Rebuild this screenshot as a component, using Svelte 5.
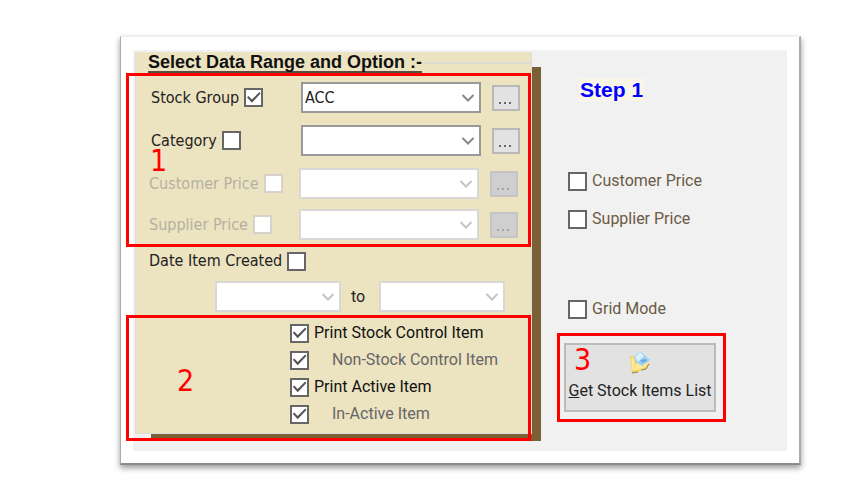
<script>
  let filters = $state([
    { id: 'group', label: 'Stock Group', checked: true, value: 'ACC', disabled: false },
    { id: 'category', label: 'Category', checked: false, value: '', disabled: false },
    { id: 'customer', label: 'Customer Price', checked: false, value: '', disabled: true },
    { id: 'supplier', label: 'Supplier Price', checked: false, value: '', disabled: true }
  ]);
  let prints = $state([
    { label: 'Print Stock Control Item', checked: true, sub: false },
    { label: 'Non-Stock Control Item', checked: true, sub: true },
    { label: 'Print Active Item', checked: true, sub: false },
    { label: 'In-Active Item', checked: true, sub: true }
  ]);
  let byDate = $state(false);
</script>

{#snippet chevron()}
  <svg class="chevron" viewBox="0 0 14 10" width="14" height="10" aria-hidden="true">
    <path d="M1.5 2 L7 7.5 L12.5 2" fill="none" stroke="currentColor" stroke-width="2" />
  </svg>
{/snippet}

<main class="page">
  <div class="card">
    <div class="window">
      <section class="range">
        <h2><span>Select Data Range and Option :-</span></h2>
        <div class="filters">
          {#each filters as f (f.id)}
            <div class="row {f.id}" class:off={f.disabled}>
              <label class="tick">{f.label}<input type="checkbox" bind:checked={f.checked} disabled={f.disabled} /></label>
              <div class="combo">
                <select aria-label={f.label} bind:value={f.value} disabled={f.disabled}>
                  <option value=""></option>
                  <option value="ACC">ACC</option>
                </select>
                {@render chevron()}
              </div>
              <button class="more" type="button" aria-label="Browse {f.label}" disabled={f.disabled}><i></i><i></i><i></i></button>
            </div>
          {/each}
          <span class="mark one"><b>1</b></span>
        </div>
        <div class="created">
          <label class="tick">Date Item Created<input type="checkbox" bind:checked={byDate} /></label>
          <div class="dates">
            <div class="combo off">
              <select aria-label="Created from" disabled><option></option></select>
              {@render chevron()}
            </div>
            <span>to</span>
            <div class="combo off">
              <select aria-label="Created to" disabled><option></option></select>
              {@render chevron()}
            </div>
          </div>
        </div>
        <div class="prints">
          {#each prints as p}
            <label class="tick" class:sub={p.sub}><input type="checkbox" bind:checked={p.checked} /><span>{p.label}</span></label>
          {/each}
          <span class="mark two"><b>2</b></span>
        </div>
      </section>

      <section class="step">
        <h3>Step 1</h3>
        <div class="prices">
          <label class="tick"><input type="checkbox" />Customer Price</label>
          <label class="tick"><input type="checkbox" />Supplier Price</label>
        </div>
        <label class="tick"><input type="checkbox" />Grid Mode</label>
        <div class="action">
          <button class="get" type="button">
            <svg viewBox="0 0 24 24" width="24" height="24" aria-hidden="true">
              <path d="M2 7 Q4 4 7 8 L8 13 L15 18 L20 11 L21 14 L18 19 L13 20 L10 22 L4 23 Z" fill="#f3cf5e" />
              <path d="M3 8 Q5 6 6 9 L7 16 L4 20 Z" fill="#fbe795" />
              <path d="M6 7 L12 1 L22 10 L14 17 L8 13 Z" fill="#9fd0f4" />
              <path d="M7 7 L12 2 L16 6 L10 12 Z" fill="#d9effd" />
              <path d="M12 10 L18 9 L19 11 L14 13 Z" fill="#68afe5" />
              <path d="M4 21 L9 13 L14 16 L21 11 L18 17 L13 19 Z" fill="#ffea94" />
              <path d="M4 23 L10 22 M13 20 L18 19 L21 14" fill="none" stroke="#8f8350" stroke-width="1" />
            </svg>
            <span><u>G</u>et Stock Items List</span>
          </button>
          <span class="mark three"><b>3</b></span>
        </div>
      </section>
    </div>
  </div>
</main>

<style>
  :global(body) { margin: 0; background: #fff; }
  * { box-sizing: border-box; }
  .page {
    padding: 36px 47px 32px 120px;
    font: 16px/20px Roboto, "Liberation Sans", sans-serif;
    color: #222;
  }
  .card {
    padding: 13px 12px 12px;
    background: #fff;
    border: 1px solid #aaa;
    border-top-color: #eee;
    border-right: 2px solid #aaa;
    border-bottom: 2px solid #8a8a8a;
    box-shadow: 0 3px 6px rgba(0, 0, 0, 0.4);
  }
  .window {
    display: flex;
    gap: 36px;
    padding: 2px 0 17px 2px;
    background: #f1f1f1;
    isolation: isolate;
  }
  .range {
    position: relative;
    flex: 397 1 0;
    background: #ece3c0;
    border: 1px solid #ddd;
    border-top: 0;
  }
  .range::before {
    content: "";
    position: absolute;
    z-index: -1;
    inset: 15px -10px -8px 15px;
    background: #7b6035;
  }
  h2 {
    display: flex;
    align-items: center;
    gap: 2px;
    margin: 0;
    padding: 1px 0 0 12px;
    font: bold 18px/18px "Liberation Sans", Arial, sans-serif;
    color: #111;
  }
  h2 span { border-bottom: 2px solid #555043; white-space: nowrap; }
  h2::after { content: ""; flex: 1; height: 2px; background: #dddcd2; }
  .filters { position: relative; padding: 9px 13px 7px; }
  .row {
    display: flex;
    align-items: center;
    height: 31px;
    margin-bottom: 12px;
  }
  .row.group, .row.category { padding-left: 2px; margin-right: -2px; }
  .row.customer { margin-bottom: 10px; }
  .row.supplier { margin-bottom: 0; }
  .row > .tick { flex: 0 0 150px; }
  .row > .combo { flex: 1; margin-right: 11px; }
  .tick {
    display: flex;
    align-items: center;
    gap: 5px;
    white-space: nowrap;
  }
  .row .tick, .created > .tick { font-family: "DejaVu Sans Condensed", "Noto Sans", sans-serif; }
  .off .tick { color: #b5b1a2; }
  input {
    appearance: none;
    flex: none;
    display: grid;
    place-items: center;
    width: 19px;
    height: 19px;
    margin: 0;
    background: #fff;
    border: 2px solid #666;
  }
  input:disabled { border-color: #d4d2ca; }
  input:checked::before {
    content: "";
    width: 15px;
    height: 13px;
    background: #555;
    clip-path: polygon(5% 48%, 15% 38%, 38% 66%, 88% 8%, 96% 20%, 38% 90%);
  }
  .combo { position: relative; height: 31px; color: #888; }
  .combo.off, .off .combo { color: #c4c4c4; }
  select {
    appearance: none;
    display: block;
    width: 100%;
    height: 100%;
    padding: 0 2px;
    background: #fff;
    border: 2px solid #999;
    border-radius: 0;
    font: 16px/20px "DejaVu Sans Condensed", "Noto Sans", sans-serif;
    color: #222;
  }
  select:disabled { border-color: #d8d8d5; opacity: 1; }
  .chevron { position: absolute; right: 6px; top: 11px; pointer-events: none; }
  .more {
    display: flex;
    align-items: end;
    justify-content: center;
    gap: 3px;
    width: 28px;
    height: 26px;
    padding: 0 2px 5px 0;
    background: #e2e2e2;
    border: 2px solid #b8b8b8;
    color: #666;
  }
  .more i { width: 2px; height: 2px; background: currentColor; }
  .more:disabled { background: #cfcfcf; border-color: #c4c4c4; color: #a4a4a4; }
  .created { padding: 4px 26px 0 13px; }
  .dates {
    display: flex;
    align-items: center;
    margin: 10px 0 0 66px;
  }
  .dates .combo { flex: 1; }
  .dates span { width: 38px; padding-right: 4px; text-align: center; }
  .prints {
    position: relative;
    display: grid;
    gap: 7px;
    padding: 11px 13px 9px 154px;
    color: #111;
  }
  .sub { color: #666; }
  .sub span { padding-left: 18px; }
  .mark {
    position: absolute;
    border: 3px solid #f00;
    color: #f00;
    font: 30px/30px "DejaVu Sans Condensed", "Noto Sans", sans-serif;
    pointer-events: none;
  }
  .mark b { position: absolute; font-weight: normal; }
  .one { inset: 0 0 0 -10px; }
  .one b { left: 21px; top: 70px; }
  .two { inset: 3px 0 -8px -10px; }
  .two b { left: 48px; top: 48px; }
  .step {
    flex: 220 1 0;
    display: flex;
    flex-direction: column;
    align-items: flex-start;
    padding-top: 26px;
    color: #6b5a45;
  }
  h3 {
    margin: 0 0 70px 11px;
    padding: 0 1px;
    background: #faf5e9;
    color: #00f;
    font: bold 21px/23px "Liberation Sans", Arial, sans-serif;
  }
  .prices { display: grid; gap: 18px; margin-bottom: 70px; }
  .action { position: relative; margin-top: 24px; }
  .get {
    display: flex;
    flex-direction: column;
    align-items: center;
    gap: 7px;
    width: 152px;
    height: 69px;
    margin-left: -4px;
    padding: 5px 0 0;
    background: #e2e2e2;
    border: 2px solid #bcbcbc;
    font: 16px/20px Roboto, "Liberation Sans", sans-serif;
    color: #222;
    white-space: nowrap;
  }
  .three { inset: -10px -10px -10px -11px; }
  .three b { left: 14px; top: 9px; }
</style>
